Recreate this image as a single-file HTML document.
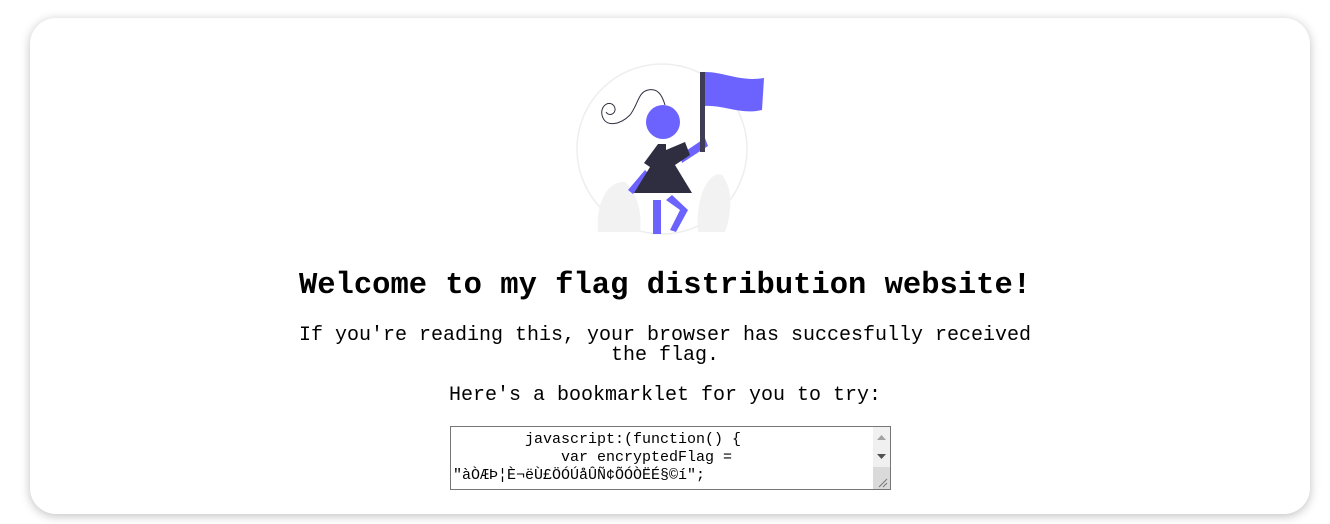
<!DOCTYPE html>
<html><head><meta charset="utf-8"><style>
body{margin:0;width:1330px;height:524px;background:#fff;font-family:"Liberation Mono",monospace;overflow:hidden}
.card{position:absolute;left:30px;top:18px;width:1280px;height:496px;border-radius:26px;background:#fff;box-shadow:0 2px 10px rgba(0,0,0,.25)}
.c{position:absolute;left:0;width:1330px;text-align:center;color:#000}
h1{margin:0;font-size:30.5px;font-weight:bold;}
.p{font-size:20px;line-height:20px}
.ta{position:absolute;left:450px;top:426px;width:441px;height:64px;box-sizing:border-box;border:1px solid #767676;font-family:"Liberation Mono",monospace;font-size:15px;line-height:18px;padding:4px 2px;white-space:pre;overflow:hidden;color:#000}
.sb{position:absolute;right:0;top:0;width:17px;height:62px;background:#f0f0f0}
</style></head><body>
<div class="card"></div>
<svg style="position:absolute;left:570px;top:60px" width="200" height="180" viewBox="0 0 200 180">
<circle cx="92" cy="89" r="85" fill="#fff" stroke="#eee" stroke-width="1.5"/>
<path d="M28 172 C25 140 40 120 55 122 C70 135 72 160 70 172Z" fill="#f2f2f2"/>
<path d="M128 172 C125 135 140 110 152 115 C165 130 160 160 155 172Z" fill="#f2f2f2"/>
<path d="M95 45 C92 35 88 28 78 30 C68 32 68 45 60 55 C50 65 35 68 32 55 C30 45 40 40 44 46 C48 52 40 58 36 52" fill="none" stroke="#2f2e41" stroke-width="1"/>
<circle cx="93" cy="62" r="17" fill="#6c63ff"/>
<rect x="83" y="140" width="8" height="34" fill="#6c63ff"/>
<path d="M96 140 L110 150 L100 170 L106 172 L118 150 L102 135Z" fill="#6c63ff"/>
<path d="M75 110 L58 130 L63 134 L80 115Z" fill="#6c63ff"/>
<path d="M110 95 L135 78 L138 86 L112 103Z" fill="#6c63ff"/>
<rect x="130" y="12" width="5" height="80" fill="#3f3d56"/>
<path d="M135 12 C155 12 170 22 194 18 L192 50 C170 55 155 45 135 46Z" fill="#6c63ff"/>
<path d="M88 84 L96 84 L96 90 L115 82 L120 95 L105 105 L122 133 L64 133 L80 107 L74 103 Z" fill="#2f2e41"/>
</svg>
<div class="c" style="top:269px"><h1>Welcome to my flag distribution website!</h1></div>
<div class="c p" style="top:326px">If you're reading this, your browser has succesfully received<br>the flag.</div>
<div class="c p" style="top:386px">Here's a bookmarklet for you to try:</div>
<div class="ta">        javascript:(function() {
            var encryptedFlag =
"àÒÆÞ¦È¬ëÙ£ÖÓÚåÛÑ¢ÕÓÒËÉ§©í";<div class="sb"><svg width="17" height="62"><path d="M4 13 L8.5 8 L13 13Z" fill="#a3a3a3"/><path d="M4 27 L8.5 32 L13 27Z" fill="#505050"/><rect x="0" y="40" width="17" height="22" fill="#dadada"/><path d="M14 52 L6 60 M14 56 L10 60" stroke="#777"/></svg></div></div>
</body></html>
